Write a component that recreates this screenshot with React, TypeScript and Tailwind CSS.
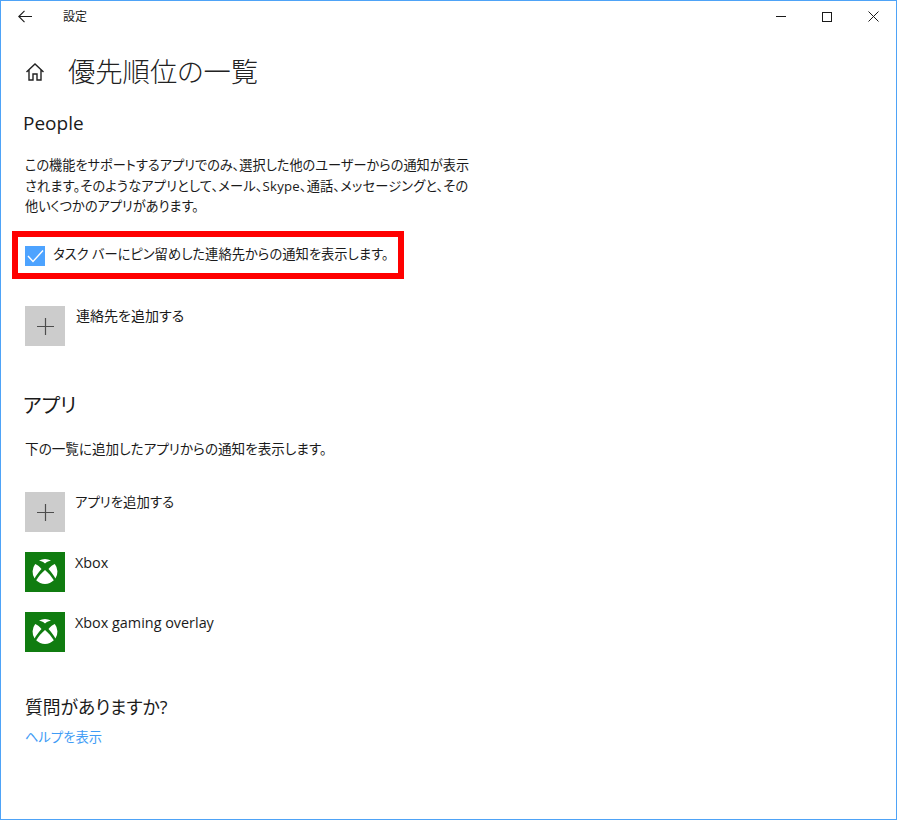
const font = "font-['Open_Sans','Noto_Sans_CJK_JP',sans-serif] [font-feature-settings:'palt']";

function XboxLogo() {
  return (
    <svg viewBox="0 0 40 40" className="w-10 h-10 bg-[#107c10]" fill="#fff">
      <path d="M14 8.6 A12.5 12.5 0 0 1 26 8.6 C24 9 22 10 20 11.5 C18 10 16 9 14 8.6 Z" />
      <path d="M20 18 C23 20.5 27 25 28.8 28.3 A12.5 12.5 0 0 1 11.2 28.3 C13 25 17 20.5 20 18 Z" />
      <path d="M10.2 12 C12 12.5 14.5 14.5 16.5 17 C13.5 20.5 11 23.5 9.6 26.5 A12.5 12.5 0 0 1 10.2 12 Z" />
      <path d="M29.8 12 C28 12.5 25.5 14.5 23.5 17 C26.5 20.5 29 23.5 30.4 26.5 A12.5 12.5 0 0 0 29.8 12 Z" />
    </svg>
  );
}

function AddTile() {
  return (
    <div className="w-10 h-10 bg-[#cccccc] flex items-center justify-center">
      <svg width="17" height="17" viewBox="0 0 17 17" stroke="#4d4d4d" strokeWidth="1.2">
        <path d="M0 8.5 H17 M8.5 0 V17" />
      </svg>
    </div>
  );
}

export default function App() {
  return (
    <div className={`w-[897px] h-[820px] bg-white border border-[#4ea3f7] text-black overflow-hidden ${font}`}>
      {/* title bar */}
      <div className="flex items-center h-[31px] text-[#1a1a1a]">
        <div className="w-[62px] pl-[17px]">
          <svg width="15" height="13" viewBox="0 0 15 13" fill="none" stroke="#1a1a1a" strokeWidth="1.1">
            <path d="M0.8 6.5 H14 M6.5 0.8 L0.8 6.5 L6.5 12.2" />
          </svg>
        </div>
        <span className="text-xs">設定</span>
        <div className="ml-auto flex items-center">
          <div className="w-[46px] flex justify-center">
            <div className="w-[10px] h-px bg-[#1a1a1a]"></div>
          </div>
          <div className="w-[46px] flex justify-center">
            <div className="w-[10px] h-[10px] border border-[#1a1a1a]"></div>
          </div>
          <div className="w-[46px] flex justify-center">
            <svg width="11" height="11" viewBox="0 0 11 11" stroke="#1a1a1a" strokeWidth="1">
              <path d="M0.5 0.5 L10.5 10.5 M10.5 0.5 L0.5 10.5" />
            </svg>
          </div>
        </div>
      </div>

      <div className="pl-[24px]">
        <div className="flex items-center h-10 mt-[20px]">
          <svg width="20" height="20" viewBox="0 0 20 20" fill="none" stroke="#222" strokeWidth="1.4">
            <path d="M1.5 10 L10 2 L18.5 10 M4 8 V18 H8 V12 H12 V18 H16 V8" />
          </svg>
          <h1 className="ml-[23px] text-[27.3px] leading-10 font-light text-[#222]">優先順位の一覧</h1>
        </div>

        <h2 className="text-[19px] leading-7 mt-[17px] -ml-[2px] text-[#1a1a1a]">People</h2>

        <p className="text-[13.2px] leading-[20.5px] mt-[18px] text-[#1a1a1a]">
          この機能をサポートするアプリでのみ、選択した他のユーザーからの通知が表示
          <br />
          <span className="tracking-[0.2px]">されます。そのようなアプリとして、メール、Skype、通話、メッセージングと、その</span>
          <br />
          他いくつかのアプリがあります。
        </p>

        {/* highlighted option */}
        <div className="flex items-center gap-2 w-[392px] h-[48px] mt-[14.5px] -ml-[13px] pl-[7px] border-[6px] border-[#ff0000]">
          <div className="w-5 h-5 mt-[2px] bg-[#4da3ff] shrink-0">
            <svg width="20" height="20" viewBox="0 0 20 20" fill="none" stroke="#fff" strokeWidth="1.4">
              <path d="M3 10 L8 15.5 L18 4.5" />
            </svg>
          </div>
          <span className="text-[13.3px] whitespace-nowrap text-[#1a1a1a]">タスク バーにピン留めした連絡先からの通知を表示します。</span>
        </div>

        <div className="flex gap-[11px] h-10 mt-[27px]">
          <AddTile />
          <span className="text-sm leading-5 text-[#1a1a1a]">連絡先を追加する</span>
        </div>

        <h2 className="text-xl leading-7 mt-[46px] -ml-[2px] text-[#1a1a1a]">アプリ</h2>

        <p className="text-[13.6px] leading-5 mt-[19px] text-[#1a1a1a]">下の一覧に追加したアプリからの通知を表示します。</p>

        <div className="flex flex-col gap-5 mt-[33px]">
          <div className="flex gap-[10px] h-10">
            <AddTile />
            <span className="text-[13.4px] leading-5 text-[#1a1a1a]">アプリを追加する</span>
          </div>
          <div className="flex gap-[10px] h-10">
            <XboxLogo />
            <span className="text-[14.4px] leading-5 mt-[1px] text-[#1a1a1a]">Xbox</span>
          </div>
          <div className="flex gap-[10px] h-10">
            <XboxLogo />
            <span className="text-[14.4px] leading-5 mt-[1px] text-[#1a1a1a]">Xbox gaming overlay</span>
          </div>
        </div>

        <h2 className="text-[17.8px] leading-7 mt-[41px] text-[#1a1a1a]">質問がありますか?</h2>
        <a className="block text-[13.3px] leading-5 mt-[6px] text-[#3f9cf5]">ヘルプを表示</a>
      </div>
    </div>
  );
}
